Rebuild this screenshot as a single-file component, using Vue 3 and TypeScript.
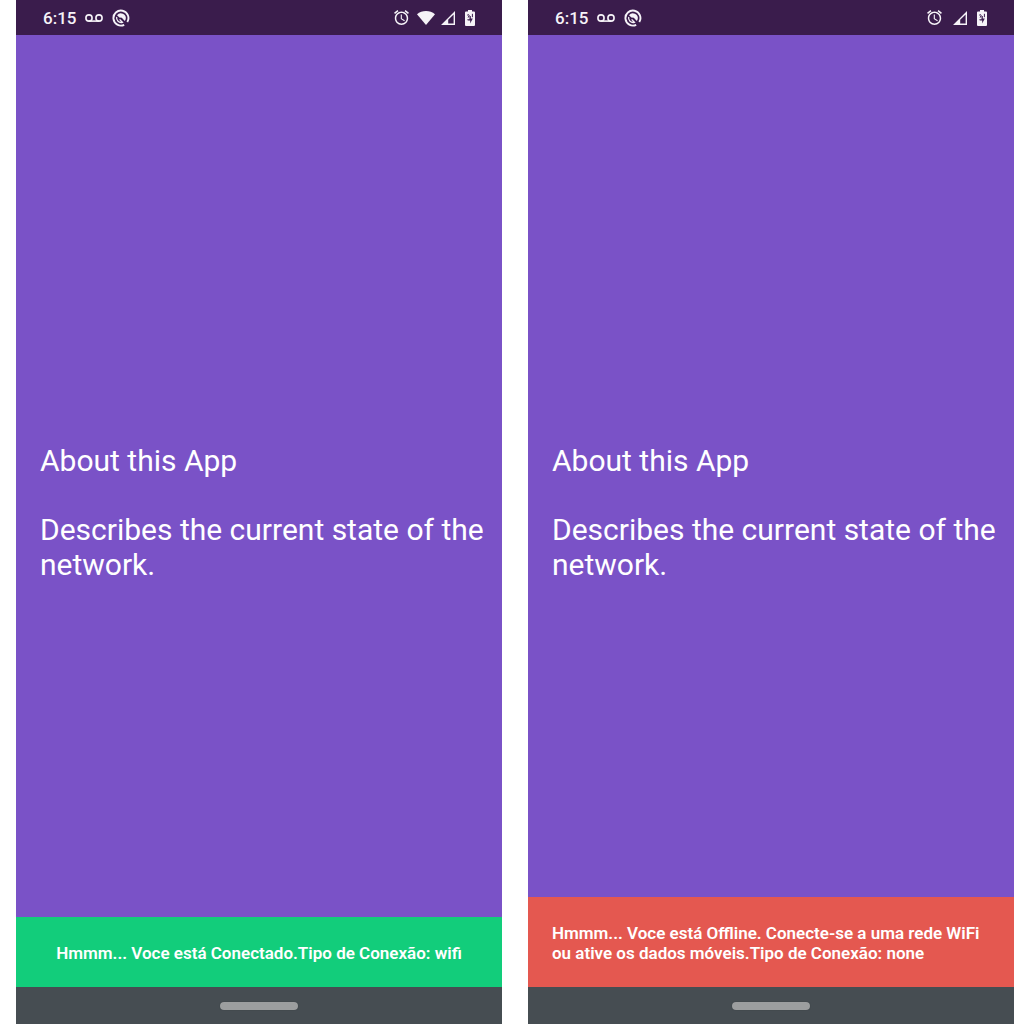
<script setup lang="ts">
interface Screen {
  id: string
  wifi: boolean
  message: string
}

const screens: Screen[] = [
  { id: 'online', wifi: true, message: 'Hmmm... Voce está Conectado.Tipo de Conexão: wifi' },
  {
    id: 'offline',
    wifi: false,
    message: 'Hmmm... Voce está Offline. Conecte-se a uma rede WiFi ou ative os dados móveis.Tipo de Conexão: none',
  },
]
</script>

<template>
  <div class="screens">
    <section v-for="screen in screens" :key="screen.id" class="phone">
      <header class="status">
        <div class="group left">
          <span class="time">6:15</span>
          <svg class="voicemail" viewBox="0 0 18 8" aria-hidden="true">
            <g fill="none" stroke="currentColor" stroke-width="1.6">
              <circle cx="4" cy="4" r="3.1" />
              <circle cx="14" cy="4" r="3.1" />
              <path d="M4 7.1h10" />
            </g>
          </svg>
          <svg class="badge" viewBox="0 0 18 18" aria-hidden="true">
            <path d="M12.2 15.8A7.5 7.5 0 1 1 15.3 13" fill="none" stroke="currentColor" stroke-width="1.9" />
            <path d="M5 6.200A4.900 4.900 0 0 1 13.700 10.200L12.800 12 9.800 8.800 7.400 8.400z" fill="currentColor" />
            <path d="M4.700 8A4.500 4.500 0 0 0 10.400 13.300L7.600 10.400" fill="none" stroke="currentColor" stroke-width="1.3" />
          </svg>
        </div>
        <div class="group right">
          <svg class="alarm" viewBox="2 1.86 20 20.14" aria-hidden="true">
            <path
              fill="currentColor"
              d="M22 5.72l-4.6-3.86-1.29 1.53 4.6 3.86L22 5.72zM7.88 3.39L6.6 1.86 2 5.71l1.29 1.53 4.59-3.85zM12.5 8H11v6l4.75 2.85.75-1.23-4-2.37V8zM12 4c-4.97 0-9 4.03-9 9s4.02 9 9 9c4.97 0 9-4.03 9-9s-4.03-9-9-9zm0 16c-3.87 0-7-3.13-7-7s3.13-7 7-7 7 3.13 7 7-3.13 7-7 7z"
            />
          </svg>
          <svg v-if="screen.wifi" class="wifi" viewBox="0 0 18 14" aria-hidden="true">
            <path fill="currentColor" d="M9 14L0 3.2C2.6 1.1 5.6 0 9 0s6.4 1.1 9 3.2z" />
          </svg>
          <svg class="signal" viewBox="0 0 14 14" aria-hidden="true">
            <path fill="currentColor" fill-rule="evenodd" d="M14 0v14H0zM12.6 3.4L7.2 8.8v3.6h5.4z" />
          </svg>
          <svg class="battery" viewBox="0 0 10 16" aria-hidden="true">
            <path
              fill="currentColor"
              d="M3 0h4v1.6h2q1 0 1 1V15q0 1-1 1H1q-1 0-1-1V2.6q0-1 1-1h2z"
            />
            <path fill="#3a1c4c" d="M2.200 9.200h2.300V6h1.300v2.400h2L5.200 13.600V10.400H2.800z" />
            <path d="M2.200 5.200q1.200-1.200 2 0L3.200 7.600M7.400 3.800v3.400" fill="none" stroke="#3a1c4c" stroke-width="1" />
          </svg>
        </div>
      </header>
      <div class="body">
        <main class="about">
          <p>About this App</p>
          <p>Describes the current state of the network.</p>
        </main>
        <div class="banner" :class="screen.id" role="status">
          <p>{{ screen.message }}</p>
        </div>
      </div>
      <footer class="nav">
        <button class="handle" type="button" aria-label="Home"></button>
      </footer>
    </section>
  </div>
</template>

<style>
body {
  margin: 0;
  background: #fff;
}
</style>

<style scoped>
.screens {
  display: grid;
  grid-template-columns: 1fr 1fr;
  gap: 26px;
  min-height: 100vh;
  box-sizing: border-box;
  padding: 0 10px 0 16px;
  font-family: Roboto, sans-serif;
  color: #fff;
}

.phone {
  display: flex;
  flex-direction: column;
  background: #7a52c7;
}

.status {
  display: flex;
  justify-content: space-between;
  align-items: center;
  height: 35px;
  padding: 0 27px;
  background: #3a1c4c;
  color: #f6f3f8;
}

.group {
  display: flex;
  align-items: center;
}

.left {
  gap: 9px;
}

.time {
  font-size: 17px;
  line-height: 20px;
  font-weight: 500;
}

svg {
  display: block;
}

.voicemail {
  width: 18px;
  height: 8px;
}

.badge {
  width: 18px;
  height: 18px;
}

.alarm {
  width: 15px;
  height: 15px;
}

.wifi {
  width: 18px;
  height: 14px;
  margin-left: 8px;
}

.signal {
  width: 14px;
  height: 14px;
  margin-left: 6px;
}

.alarm + .signal {
  margin-left: 11px;
}

.battery {
  width: 10px;
  height: 16px;
  margin-left: 10px;
}

.body {
  flex: 1;
  display: grid;
}

.about,
.banner {
  grid-area: 1 / 1;
}

.about {
  align-self: center;
  padding: 2px 16px 0 24px;
  font-size: 30px;
  line-height: 35px;
}

p {
  margin: 0;
}

.about p + p {
  margin-top: 34px;
}

.banner {
  align-self: end;
  display: flex;
  justify-content: center;
  padding: 26px 24px 24px;
  font-size: 17px;
  line-height: 20px;
  font-weight: 600;
}

.online {
  background: #12cd7b;
}

.offline {
  background: #e45850;
}

.nav {
  display: flex;
  justify-content: center;
  align-items: center;
  height: 37px;
  background: #464d52;
}

.handle {
  width: 78px;
  height: 8px;
  padding: 0;
  border: 0;
  border-radius: 4px;
  background: #9c9e9f;
  box-shadow: 0 0 1px #2f3437;
}
</style>
